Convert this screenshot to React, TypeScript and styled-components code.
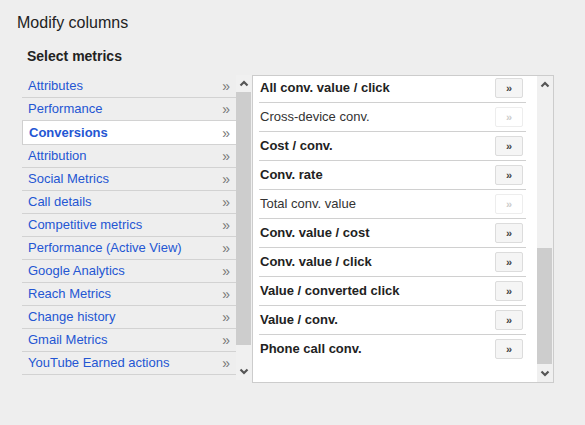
import styled, { createGlobalStyle } from "styled-components";

const GlobalStyle = createGlobalStyle`
  body {
    margin: 0;
    background: #eeeeee;
    font-family: "Liberation Sans", Arial, sans-serif;
  }
`;

const CATEGORIES = [
  "Attributes",
  "Performance",
  "Conversions",
  "Attribution",
  "Social Metrics",
  "Call details",
  "Competitive metrics",
  "Performance (Active View)",
  "Google Analytics",
  "Reach Metrics",
  "Change history",
  "Gmail Metrics",
  "YouTube Earned actions",
];

const METRICS = [
  { name: "All conv. value / click", on: true },
  { name: "Cross-device conv.", on: false },
  { name: "Cost / conv.", on: true },
  { name: "Conv. rate", on: true },
  { name: "Total conv. value", on: false },
  { name: "Conv. value / cost", on: true },
  { name: "Conv. value / click", on: true },
  { name: "Value / converted click", on: true },
  { name: "Value / conv.", on: true },
  { name: "Phone call conv.", on: true },
];

const Page = styled.div`
  padding: 13px 0 0 17px;
`;

const Title = styled.h1`
  margin: 0;
  font-size: 16px;
  line-height: 20px;
  font-weight: normal;
  color: #222;
`;

const Section = styled.div`
  margin: 14px 0 0 5px;
`;

const SubTitle = styled.h2`
  margin: 0 0 10px 5px;
  font-size: 14px;
  line-height: 18px;
  font-weight: bold;
  color: #222;
`;

const Panels = styled.div`
  display: flex;
`;

const LeftPane = styled.div`
  display: flex;
  height: 305px;
`;

const CategoryList = styled.ul`
  list-style: none;
  margin: 0;
  padding: 0;
  width: 214px;
  overflow: hidden;
`;

const Category = styled.li<{ $active?: boolean }>`
  display: flex;
  align-items: center;
  justify-content: space-between;
  box-sizing: border-box;
  height: ${({ $active }) => ($active ? 24 : 23)}px;
  padding: ${({ $active }) => ($active ? "0 6px 0 6px" : "0 6px 1px")};
  border-bottom: 1px solid #d2d2d2;
  border-left: ${({ $active }) => ($active ? "1px solid #cfcfcf" : "none")};
  background: ${({ $active }) => ($active ? "#fff" : "transparent")};
  font-size: 13px;
  font-weight: ${({ $active }) => ($active ? "bold" : "normal")};
  color: #2456d3;
  cursor: pointer;
`;

const Chevrons = styled.span`
  color: #777;
  font-size: 14px;
  font-weight: normal;
`;

const Scrollbar = styled.div`
  display: flex;
  flex-direction: column;
  width: 16px;
  background: #f0f0f0;
`;

const ScrollButton = styled.div`
  display: flex;
  align-items: center;
  justify-content: center;
  height: 17px;
  flex: none;
`;

const Track = styled.div<{ $before: number; $thumb: number }>`
  flex: 1;
  display: flex;
  flex-direction: column;
  padding-top: ${({ $before }) => $before}px;

  &::after {
    content: "";
    display: block;
    height: ${({ $thumb }) => $thumb}px;
    margin-right: 1px;
    background: #cdcdcd;
  }
`;

const RightPane = styled.div`
  display: flex;
  box-sizing: border-box;
  width: 302px;
  height: 308px;
  border: 1px solid #cccccc;
  background: #fff;
`;

const MetricArea = styled.div`
  flex: 1;
  overflow: hidden;
  padding: 0 11px 0 6px;
`;

const MetricList = styled.ul`
  list-style: none;
  margin: -3px 0 0;
  padding: 0;
`;

const Metric = styled.li<{ $on: boolean }>`
  display: flex;
  align-items: center;
  justify-content: space-between;
  box-sizing: border-box;
  height: 29px;
  padding: 0 3px 1px 1px;
  border-top: 1px solid #d0d0d0;
  font-size: 13px;
  font-weight: ${({ $on }) => ($on ? "bold" : "normal")};
  color: ${({ $on }) => ($on ? "#222" : "#333")};
`;

const AddButton = styled.button<{ $on: boolean }>`
  box-sizing: border-box;
  width: 28px;
  height: 20px;
  margin-top: 1px;
  padding: 0;
  border: 1px solid ${({ $on }) => ($on ? "#dcdcdc" : "#ededed")};
  border-radius: 2px;
  background: ${({ $on }) => ($on ? "#f5f5f5" : "#fff")};
  color: ${({ $on }) => ($on ? "#444" : "#ccc")};
  font-family: "Liberation Sans", Arial, sans-serif;
  font-size: 11px;
  font-weight: bold;
  line-height: 18px;
`;

const Caret = ({ down }: { down?: boolean }) => (
  <svg width="10" height="7" viewBox="0 0 10 7">
    <polyline
      points={down ? "1.5,1.5 5,5 8.5,1.5" : "1.5,5.5 5,2 8.5,5.5"}
      fill="none"
      stroke="#555"
      strokeWidth="2.2"
    />
  </svg>
);

export default function App() {
  return (
    <Page>
      <GlobalStyle />
      <Title>Modify columns</Title>
      <Section>
        <SubTitle>Select metrics</SubTitle>
        <Panels>
          <LeftPane>
            <CategoryList>
              {CATEGORIES.map((name) => (
                <Category key={name} $active={name === "Conversions"}>
                  {name}
                  <Chevrons>»</Chevrons>
                </Category>
              ))}
            </CategoryList>
            <Scrollbar>
              <ScrollButton>
                <Caret />
              </ScrollButton>
              <Track $before={0} $thumb={253} />
              <ScrollButton>
                <Caret down />
              </ScrollButton>
            </Scrollbar>
          </LeftPane>
          <RightPane>
            <MetricArea>
              <MetricList>
                {METRICS.map(({ name, on }) => (
                  <Metric key={name} $on={on}>
                    {name}
                    <AddButton $on={on}>»</AddButton>
                  </Metric>
                ))}
              </MetricList>
            </MetricArea>
            <Scrollbar>
              <ScrollButton>
                <Caret />
              </ScrollButton>
              <Track $before={155} $thumb={116} />
              <ScrollButton>
                <Caret down />
              </ScrollButton>
            </Scrollbar>
          </RightPane>
        </Panels>
      </Section>
    </Page>
  );
}
